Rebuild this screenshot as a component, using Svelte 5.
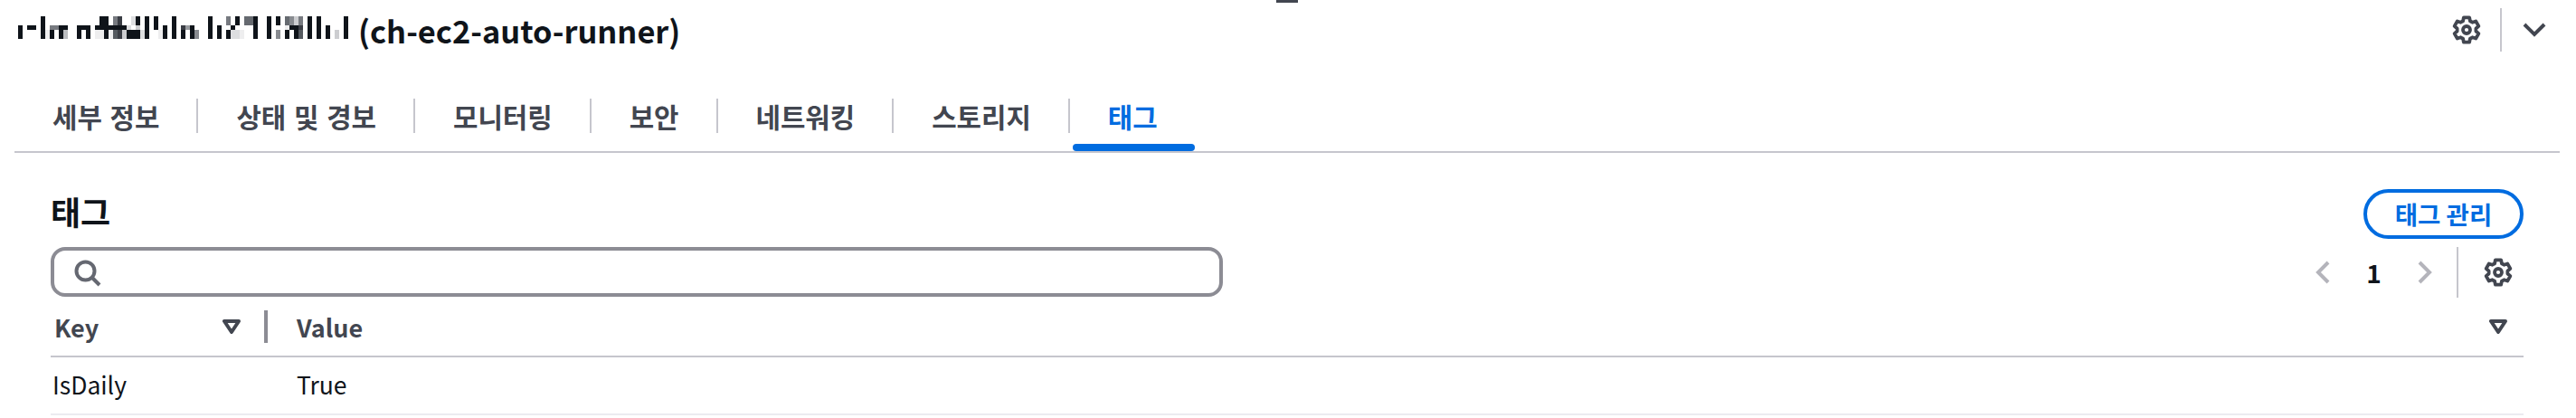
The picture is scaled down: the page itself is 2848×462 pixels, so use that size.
<script>
  const shades = { d: '#0f141a', 3: '#3a3d44', 5: '#555a60', 6: '#666a70', 7: '#777a80', 8: '#888b90', 9: '#999ca0', b: '#bbbdc0', c: '#cccdd0', e: '#dddee0', f: '#eeeeef' };
  const columns = ['..ddd','.....','..d..','..d..','.....','ddddd','...ff','..7dd','..7..','..ddd','..dbb','.....','.....','..ddd','..d..','..ddd','.....','..dff','dddff','ddddd','..dff','77d55','33d33','..dcc','..edd','ee.dd','ddcdd','...ee','ddddd','.....','ddd..','...ff','..ddd','.....','ddddd','.....','..3dd','..9..','..ddd','...88','.....','.....','ddddd','.....','..ddd','.....','77.dd','..dee','dd.ee','...ff','66...','66...','ddddd','.....','.....','ddddd','.....','dd.88','.....','66fdd','88d..','ccddd','77355','.....','ddddd','.....','ddddd','.....','..ddd','.....','...cc','.....','ddddd'];
  const cells = columns.flatMap((c, x) => [...c].flatMap((s, y) => (s === '.' ? [] : [{ x, y, fill: shades[s] }])));

  const tabs = ['세부 정보', '상태 및 경보', '모니터링', '보안', '네트워킹', '스토리지', '태그'];

  function gearPath() {
    const cx = 8, cy = 8, R = 7, r = 5.25;
    const pt = (rad, deg) => {
      const a = (deg * Math.PI) / 180;
      return `${(cx + rad * Math.cos(a)).toFixed(2)} ${(cy + rad * Math.sin(a)).toFixed(2)}`;
    };
    let d = '';
    for (let i = 0; i < 6; i++) {
      const a = -90 + i * 60;
      d += `${i === 0 ? 'M' : 'L'}${pt(r, a - 22)} L${pt(R, a - 13)} L${pt(R, a + 13)} L${pt(r, a + 22)} `;
    }
    return d + 'Z';
  }
  const gear = gearPath();
</script>

{#snippet gearIcon()}
  <svg class="gear" viewBox="0 0 16 16" aria-hidden="true">
    <path d={gear} />
    <circle cx="8" cy="8" r="2" />
  </svg>
{/snippet}

{#snippet sortIcon()}
  <svg class="sort" viewBox="0 0 20 16" aria-hidden="true">
    <path d="M2 2h16L10 14z" />
  </svg>
{/snippet}

<div class="stray"></div>

<main class="page">
  <header class="top">
    <h1 class="title">
      <svg class="mosaic" viewBox="0 0 365 25" aria-hidden="true">
        {#each cells as c}
          <rect x={c.x * 5} y={c.y * 5} width="5" height="5" fill={c.fill} />
        {/each}
      </svg>
      <span>(ch-ec2-auto-runner)</span>
    </h1>
    <div class="top-actions">
      {@render gearIcon()}
      <span class="vr"></span>
      <svg class="chev" viewBox="0 0 26 16" aria-hidden="true"><path d="M2 2l11 11L24 2" /></svg>
    </div>
  </header>

  <nav class="tabs">
    {#each tabs as t, i}
      <div class="tab" class:active={i === tabs.length - 1}>{t}</div>
    {/each}
  </nav>

  <section class="panel">
    <div class="panel-head">
      <h2>태그</h2>
      <button class="manage">태그 관리</button>
    </div>

    <div class="filter-row">
      <div class="search">
        <svg viewBox="0 0 30 30" aria-hidden="true"><circle cx="12.5" cy="12.5" r="10" /><path d="M20 20l8 8" /></svg>
      </div>
      <div class="pager">
        <svg class="pg" viewBox="0 0 16 26" aria-hidden="true"><path d="M14 2L3 13l11 11" /></svg>
        <span class="num">1</span>
        <svg class="pg" viewBox="0 0 16 26" aria-hidden="true"><path d="M2 2l11 11L2 24" /></svg>
        <span class="vr tall"></span>
        {@render gearIcon()}
      </div>
    </div>

    <div class="thead">
      <div class="th key">Key {@render sortIcon()}</div>
      <span class="resizer"></span>
      <div class="th val">Value {@render sortIcon()}</div>
    </div>
    <div class="trow">
      <div class="td key">IsDaily</div>
      <div class="td val">True</div>
    </div>
  </section>
</main>

<style>
  :global(body) { margin: 0; background: #fff; }

  .page {
    width: 2848px;
    height: 462px;
    box-sizing: border-box;
    padding: 0 18px 0 16px;
    font-family: "Noto Sans CJK KR", "Noto Sans", sans-serif;
    color: #0f141a;
    overflow: hidden;
  }

  .stray {
    position: absolute;
    left: 1411px;
    top: 0;
    width: 24px;
    height: 3px;
    background: #424650;
  }

  .top {
    display: flex;
    justify-content: space-between;
    align-items: center;
    height: 66px;
    padding: 0 15px 0 4px;
    box-sizing: border-box;
  }
  .title {
    display: flex;
    align-items: center;
    gap: 11px;
    margin: 0;
    font-size: 34.4px;
    font-weight: 700;
    line-height: 40px;
  }
  .mosaic { width: 365px; height: 25px; flex: none; margin-top: -6px; }
  .top-actions { display: flex; align-items: center; }
  .top-actions .gear { margin-right: 21px; }
  .top-actions .vr { height: 48px; margin-right: 23px; }
  .chev { width: 26px; height: 16px; }
  .chev path { fill: none; stroke: #424650; stroke-width: 4; }

  .gear { width: 32px; height: 32px; flex: none; }
  .gear path, .gear circle { fill: none; stroke: #424650; stroke-width: 1.9; stroke-linejoin: round; }

  .vr { display: block; width: 2px; background: #c6c6cd; flex: none; }

  .tabs {
    display: flex;
    align-items: flex-start;
    height: 103px;
    box-sizing: border-box;
    border-bottom: 2px solid #c6c6cd;
    padding-top: 43px;
  }
  .tab {
    position: relative;
    height: 38px;
    line-height: 38px;
    padding: 0 41px 0 42px;
    font-size: 29.8px;
    font-weight: 700;
    word-spacing: 2px;
    color: #424650;
    border-right: 2px solid #c6c6cd;
    white-space: nowrap;
  }
  .tab.active { color: #006ce0; border-right: 0; }
  .tab.active::after {
    content: "";
    position: absolute;
    left: 3px;
    right: 0;
    bottom: -20px;
    height: 8px;
    border-radius: 4px;
    background: #006ce0;
  }

  .panel { padding: 0 40px; }
  .panel-head {
    display: flex;
    justify-content: space-between;
    align-items: flex-start;
    height: 104px;
    box-sizing: border-box;
    padding-top: 40px;
  }
  h2 {
    margin: 0;
    font-size: 36px;
    font-weight: 700;
    line-height: 48px;
  }
  .manage {
    width: 177px;
    height: 55px;
    box-sizing: border-box;
    border: 4px solid #006ce0;
    border-radius: 28px;
    background: #fff;
    color: #006ce0;
    font: 700 27.5px/1 "Noto Sans CJK KR", sans-serif;
    padding: 0;
  }

  .filter-row {
    display: flex;
    justify-content: space-between;
    align-items: stretch;
    height: 56px;
  }
  .search {
    width: 1296px;
    height: 55px;
    box-sizing: border-box;
    border: 4px solid #8c8c94;
    border-radius: 16px;
    padding: 10px 0 0 22px;
  }
  .search svg { display: block; width: 30px; height: 30px; }
  .search circle, .search path { fill: none; stroke: #656871; stroke-width: 4; }

  .pager { display: flex; align-items: center; padding-right: 12px; }
  .pg { width: 16px; height: 26px; flex: none; }
  .pg path { fill: none; stroke: #b4b4bb; stroke-width: 4; }
  .num { width: 97px; text-align: center; font-size: 28px; font-weight: 700; }
  .vr.tall { height: 56px; margin: 0 28px 0 27px; }

  .thead {
    display: flex;
    align-items: center;
    height: 66px;
    box-sizing: border-box;
    border-bottom: 2px solid #c6c6cd;
  }
  .th {
    display: flex;
    align-items: center;
    justify-content: space-between;
    font-size: 27px;
    font-weight: 700;
    color: #424650;
  }
  .th.key { width: 206px; padding-left: 4px; margin-right: 26px; }
  .th.val { flex: 1; margin-left: 32px; padding-right: 18px; }
  .resizer { width: 4px; height: 36px; background: #8c8c94; flex: none; }
  .sort { width: 20px; height: 16px; flex: none; }
  .sort path { fill: none; stroke: #424650; stroke-width: 4; stroke-linejoin: round; }

  .trow {
    display: flex;
    align-items: center;
    height: 64px;
    box-sizing: border-box;
    border-bottom: 2px solid #ebebf0;
    padding-bottom: 3px;
    font-size: 26.5px;
  }
  .td.key { width: 270px; padding-left: 2px; }
</style>
